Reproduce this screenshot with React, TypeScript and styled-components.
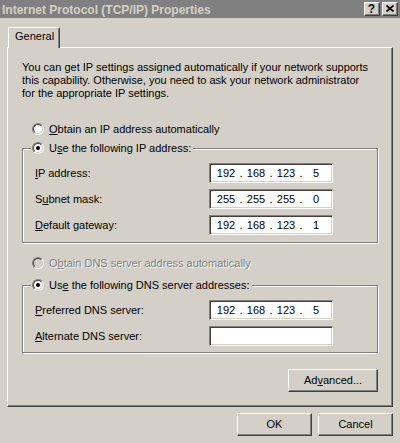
import React from "react";
import styled, { createGlobalStyle } from "styled-components";

const FACE = "#d4d0c8";
const SHADOW = "#808080";
const DARK = "#404040";

const GlobalStyle = createGlobalStyle`
  html, body { margin: 0; padding: 0; background: ${FACE}; }
  body {
    font-family: "Liberation Sans", Arial, sans-serif;
    font-size: 11px;
    color: #000;
  }
  u { text-underline-offset: 1px; }
`;

const Window = styled.div`
  width: 400px;
  height: 443px;
  background: ${FACE};
  display: flex;
  flex-direction: column;
  overflow: hidden;
`;

const TitleBar = styled.div`
  height: 18px;
  background: ${SHADOW};
  display: flex;
  align-items: center;
  padding: 0 2px 0 2px;
  box-sizing: border-box;
`;

const TitleText = styled.div`
  flex: 1;
  font-weight: bold;
  font-size: 12px;
  color: ${FACE};
  line-height: 16px;
  padding-top: 1px;
  white-space: nowrap;
`;

const CaptionButtons = styled.div`
  display: flex;
  gap: 2px;
`;

const CaptionButton = styled.div`
  width: 16px;
  height: 14px;
  box-sizing: border-box;
  background: ${FACE};
  border: 1px solid;
  border-color: #fff ${DARK} ${DARK} #fff;
  box-shadow: inset -1px -1px ${SHADOW};
  display: flex;
  align-items: center;
  justify-content: center;
  font-weight: bold;
  font-size: 12px;
  line-height: 12px;
  padding: 0 1px 1px 0;
`;

const Body = styled.div`
  padding: 9px 7px 0 7px;
  display: flex;
  flex-direction: column;
`;

const TabStrip = styled.div`
  display: flex;
  position: relative;
  z-index: 1;
  margin-bottom: -1px;
`;

const Tab = styled.div`
  margin-left: 1px;
  width: 52px;
  height: 21px;
  box-sizing: border-box;
  background: ${FACE};
  border-top: 1px solid #fff;
  border-left: 1px solid #fff;
  border-right: 1px solid ${DARK};
  border-radius: 2px 2px 0 0;
  box-shadow: inset -1px 0 ${SHADOW};
  padding: 2px 0 0 6px;
  line-height: 13px;
`;

const Panel = styled.div`
  border: 1px solid;
  border-color: #fff ${DARK} ${DARK} #fff;
  box-shadow: inset -1px -1px ${SHADOW};
  padding: 13px 13px 14px 14px;
  display: flex;
  flex-direction: column;
`;

const Intro = styled.p`
  margin: 0;
  line-height: 13px;
`;

const RadioRow = styled.label<{ $top?: number; $disabled?: boolean }>`
  display: flex;
  align-items: center;
  gap: 5px;
  height: 16px;
  line-height: 16px;
  margin-top: ${(p) => p.$top ?? 0}px;
  margin-left: 10px;
  color: ${(p) => (p.$disabled ? SHADOW : "#000")};
  text-shadow: ${(p) => (p.$disabled ? "1px 1px 0 #fff" : "none")};
`;

const RadioOuter = styled.span`
  width: 12px;
  height: 12px;
  box-sizing: border-box;
  border-radius: 50%;
  border: 1px solid;
  border-color: ${SHADOW} #fff #fff ${SHADOW};
  display: inline-flex;
  flex: none;
`;

const RadioInner = styled.span<{ $disabled?: boolean }>`
  width: 10px;
  height: 10px;
  box-sizing: border-box;
  border-radius: 50%;
  border: 1px solid;
  border-color: ${DARK} ${FACE} ${FACE} ${DARK};
  background: ${(p) => (p.$disabled ? FACE : "#fff")};
  display: flex;
  align-items: center;
  justify-content: center;
`;

const RadioDot = styled.span`
  width: 4px;
  height: 4px;
  border-radius: 50%;
  background: #000;
`;

const Group = styled.div<{ $top: number; $padBottom: number }>`
  margin-top: ${(p) => p.$top}px;
  margin-right: 1px;
  border: 1px solid ${SHADOW};
  box-shadow: inset 1px 1px #fff, 1px 1px #fff;
  padding-bottom: ${(p) => p.$padBottom}px;
  display: flex;
  flex-direction: column;
`;

const Legend = styled.div`
  align-self: flex-start;
  margin: -9px 0 0 8px;
  padding: 0 2px 0 1px;
  background: ${FACE};
  display: flex;
`;

const LegendRadio = styled(RadioRow)`
  margin: 0;
`;

const FieldGrid = styled.div`
  display: grid;
  grid-template-columns: 174px 124px;
  row-gap: 6px;
  align-items: center;
  padding: 7px 0 0 12px;
`;

const FieldLabel = styled.span`
  line-height: 13px;
`;

const IpBox = styled.div`
  height: 20px;
  box-sizing: border-box;
  background: #fff;
  border: 1px solid;
  border-color: ${SHADOW} #fff #fff ${SHADOW};
  box-shadow: inset 1px 1px ${DARK}, inset -1px -1px ${FACE};
  display: flex;
  align-items: center;
  padding: 0 0 0 5px;
  line-height: 13px;
`;

const Octet = styled.span`
  width: 22px;
  text-align: center;
`;

const Dot = styled.span`
  width: 8px;
  text-align: center;
`;

const Button = styled.button<{ $width: number }>`
  width: ${(p) => p.$width}px;
  height: 23px;
  box-sizing: border-box;
  background: ${FACE};
  border: 1px solid;
  border-color: #fff ${DARK} ${DARK} #fff;
  box-shadow: inset -1px -1px ${SHADOW};
  font: inherit;
  color: #000;
  padding: 0;
  line-height: 13px;
`;

const AdvancedButton = styled(Button)`
  align-self: flex-end;
  margin-top: 16px;
  margin-right: 1px;
`;

const Footer = styled.div`
  display: flex;
  justify-content: flex-end;
  gap: 6px;
  padding-top: 6px;
`;

function Radio({ checked, disabled }: { checked?: boolean; disabled?: boolean }) {
  return (
    <RadioOuter>
      <RadioInner $disabled={disabled}>{checked && <RadioDot />}</RadioInner>
    </RadioOuter>
  );
}

function IpField({ value }: { value?: string[] }) {
  return (
    <IpBox>
      {value &&
        value.map((v, i) => (
          <React.Fragment key={i}>
            <Octet>{v}</Octet>
            {i < 3 && <Dot>.</Dot>}
          </React.Fragment>
        ))}
    </IpBox>
  );
}

export default function App() {
  return (
    <>
      <GlobalStyle />
      <Window>
        <TitleBar>
          <TitleText>Internet Protocol (TCP/IP) Properties</TitleText>
          <CaptionButtons>
            <CaptionButton>?</CaptionButton>
            <CaptionButton>
              <svg width="8" height="7" viewBox="0 0 8 7">
                <path d="M0.5 0.5 L7.5 6.5 M7.5 0.5 L0.5 6.5" stroke="#000" strokeWidth="1.6" />
              </svg>
            </CaptionButton>
          </CaptionButtons>
        </TitleBar>
        <Body>
          <TabStrip>
            <Tab>General</Tab>
          </TabStrip>
          <Panel>
            <Intro>
              You can get IP settings assigned automatically if your network supports
              <br />
              this capability. Otherwise, you need to ask your network administrator
              <br />
              for the appropriate IP settings.
            </Intro>
            <RadioRow $top={21}>
              <Radio />
              <span>
                <u>O</u>btain an IP address automatically
              </span>
            </RadioRow>
            <Group $top={11} $padBottom={7}>
              <Legend>
                <LegendRadio>
                  <Radio checked />
                  <span>
                    U<u>s</u>e the following IP address:
                  </span>
                </LegendRadio>
              </Legend>
              <FieldGrid>
                <FieldLabel>
                  <u>I</u>P address:
                </FieldLabel>
                <IpField value={["192", "168", "123", "5"]} />
                <FieldLabel>
                  S<u>u</u>bnet mask:
                </FieldLabel>
                <IpField value={["255", "255", "255", "0"]} />
                <FieldLabel>
                  <u>D</u>efault gateway:
                </FieldLabel>
                <IpField value={["192", "168", "123", "1"]} />
              </FieldGrid>
            </Group>
            <RadioRow $top={12} $disabled>
              <Radio disabled />
              <span>
                O<u>b</u>tain DNS server address automatically
              </span>
            </RadioRow>
            <Group $top={14} $padBottom={6}>
              <Legend>
                <LegendRadio>
                  <Radio checked />
                  <span>
                    Us<u>e</u> the following DNS server addresses:
                  </span>
                </LegendRadio>
              </Legend>
              <FieldGrid>
                <FieldLabel>
                  <u>P</u>referred DNS server:
                </FieldLabel>
                <IpField value={["192", "168", "123", "5"]} />
                <FieldLabel>
                  <u>A</u>lternate DNS server:
                </FieldLabel>
                <IpField />
              </FieldGrid>
            </Group>
            <AdvancedButton $width={90}>
              Ad<u>v</u>anced...
            </AdvancedButton>
          </Panel>
          <Footer>
            <Button $width={75}>OK</Button>
            <Button $width={75}>Cancel</Button>
          </Footer>
        </Body>
      </Window>
    </>
  );
}
